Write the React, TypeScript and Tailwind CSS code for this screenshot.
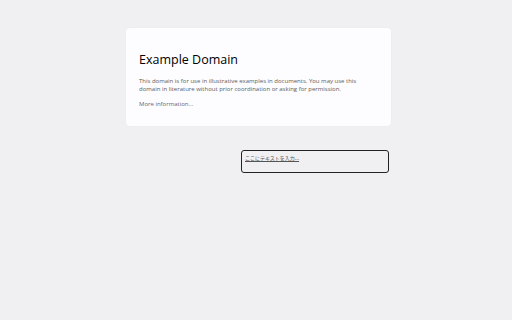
export default function App() {
  return (
    <div className="w-[512px] h-[320px] bg-[#f0f0f2] overflow-hidden" style={{ fontFamily: '"Open Sans", "Noto Sans", "Noto Sans CJK JP", sans-serif' }}>
      <div className="pt-[28px] pl-[126px]">
        <div className="w-[265px] h-[98px] bg-[#fdfdff] rounded-[4px] shadow-[0_0_2px_rgba(0,0,0,0.04)] px-[13px] pt-[23px]">
          <div className="text-[12.5px] leading-[18px] text-[#000]">Example Domain</div>
          <p className="mt-[8px] text-[6px] leading-[8px] text-[#5c5c5c]">
            This domain is for use in illustrative examples in documents. You may use this domain in literature without prior coordination or asking for permission.
          </p>
          <p className="mt-[7px] text-[6px] leading-[8px] text-[#66667a]">More information...</p>
        </div>
        <div className="mt-[24px] ml-[115px] w-[148px] h-[23px] border border-[#222] rounded-[3px] px-[3px] pt-[3px]">
          <div className="text-[5px] leading-[8px] text-[#555] underline" style={{ fontFamily: '"Noto Sans CJK JP", sans-serif' }}>ここにテキストを入力...</div>
        </div>
      </div>
    </div>
  );
}
